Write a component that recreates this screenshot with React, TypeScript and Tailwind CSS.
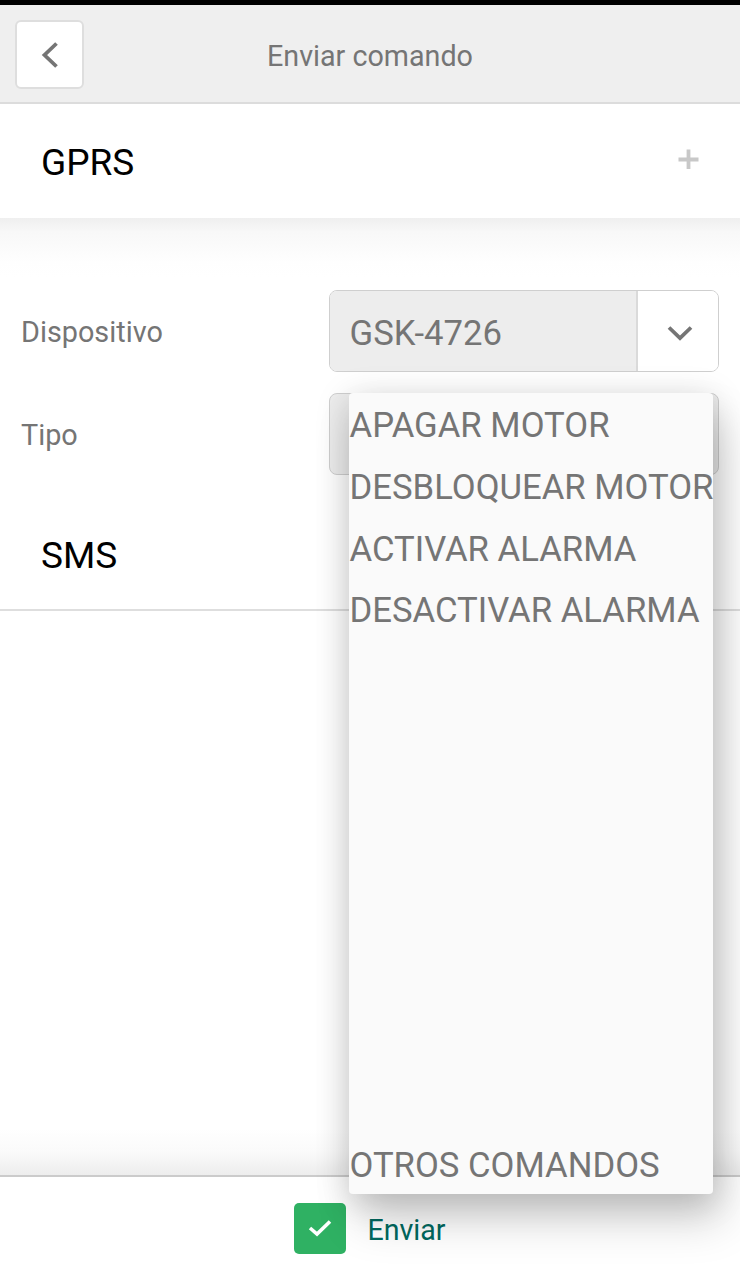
import { useState } from 'react';

const TYPES = [
    'APAGAR MOTOR',
    'DESBLOQUEAR MOTOR',
    'ACTIVAR ALARMA',
    'DESACTIVAR ALARMA',
    '', '', '', '', '', '', '', '',
    'OTROS COMANDOS',
];

const ChevronLeft = () => (
    <svg width="18" height="28" viewBox="0 0 18 28" fill="none">
        <path d="M15.5 2.5 L3.5 14 L15.5 25.5" stroke="#757575" strokeWidth="3.8" />
    </svg>
);

const ChevronDown = () => (
    <svg width="26" height="16" viewBox="0 0 26 16" fill="none">
        <path d="M2 2.5 L13 13 L24 2.5" stroke="#757575" strokeWidth="3.8" />
    </svg>
);

const Header = () => (
    <header className="relative flex h-[99px] items-center justify-center border-b-2 border-[#dcdcdc] bg-[#efefef]">
        <button className="absolute left-[15px] top-[15px] flex h-[69px] w-[69px] items-center justify-center rounded-md border-2 border-[#dedede] bg-white">
            <ChevronLeft />
        </button>
        <h1 className="pt-1 text-[28.7px] leading-[34px] text-[#757575]">Enviar comando</h1>
    </header>
);

const TypeMenu = ({ onSelect }: { onSelect: (value: string) => void }) => (
    <ul className="absolute left-[19px] -top-px z-10 w-[364px] rounded bg-[#fafafa] shadow-[10px_28px_44px_rgba(0,0,0,0.17),0_6px_34px_rgba(0,0,0,0.18)]">
        {TYPES.map((type, i) => (
            <li
                key={i}
                onClick={() => onSelect(type)}
                className="flex h-[61.65px] items-center whitespace-nowrap pl-[0.5px] pt-[4px] text-[34.7px] leading-[41px] text-[#757575]"
            >
                {type}
            </li>
        ))}
    </ul>
);

const App = () => {
    const [, setType] = useState('');

    return (
        <div className="flex h-[1280px] w-[740px] flex-col overflow-hidden bg-white font-['Roboto',sans-serif]">
            <div className="h-[5px] bg-black" />
            <Header />

            <section className="flex h-[114px] items-center justify-between pl-[41px] pr-[41px]">
                <h2 className="pt-[3px] text-[37px] leading-[43px] text-black">GPRS</h2>
                <svg width="21" height="21" viewBox="0 0 21 21" className="-mt-[3px]">
                    <path d="M10.5 0.5 V20 M0.5 10.5 H20.5" stroke="#c8c8c8" strokeWidth="3.8" />
                </svg>
            </section>

            <section className="flex h-[270px] flex-col gap-[21px] bg-[linear-gradient(to_bottom,#efefef,#f8f8f8_14px,#fefefe_44px,#fff_60px)] pl-[21px] pr-[21px] pt-[72px]">
                <div className="flex items-center justify-between">
                    <label className="pt-px text-[28.8px] leading-[34px] text-[#757575]">Dispositivo</label>
                    <div className="flex h-[82px] w-[390px] overflow-hidden rounded-lg border border-[#cfcfcf]">
                        <div className="flex flex-1 items-center border-r-2 border-[#dadada] bg-[#ededed] pl-[19.5px] pt-1 text-[34.7px] leading-[41px] text-[#757575]">
                            GSK-4726
                        </div>
                        <div className="flex w-[80px] items-center justify-center bg-white pl-[3px] pt-[3px]">
                            <ChevronDown />
                        </div>
                    </div>
                </div>
                <div className="flex items-center justify-between">
                    <label className="pt-px text-[28.8px] leading-[34px] text-[#757575]">Tipo</label>
                    <div className="relative h-[82px] w-[390px] rounded-lg border border-[#cfcfcf] bg-[#ededed]">
                        <TypeMenu onSelect={setType} />
                    </div>
                </div>
            </section>

            <section className="flex h-[123px] items-center border-b-2 border-[#dedede] pl-[41px] pt-3.5">
                <h2 className="text-[37px] leading-[43px] text-black">SMS</h2>
            </section>

            <div className="flex flex-1 flex-col justify-end">
                <div className="h-[46px] bg-[linear-gradient(to_bottom,#fff,#fafafa_50%,#ededed)]" />
            </div>

            <footer className="flex h-[105px] items-center justify-center gap-[21px] border-t-2 border-[#cbcbcb]">
                <span className="flex h-[51px] w-[52px] items-center justify-center rounded-[5px] bg-[#2fb163]">
                    <svg width="24" height="18" viewBox="0 0 24 18" fill="none">
                        <path d="M2 8 L9 14 L22 1.5" stroke="#fff" strokeWidth="3.6" />
                    </svg>
                </span>
                <span className="pt-[3px] text-[28.6px] leading-[34px] text-[#00695f]">Enviar</span>
            </footer>
        </div>
    );
};

export default App;
